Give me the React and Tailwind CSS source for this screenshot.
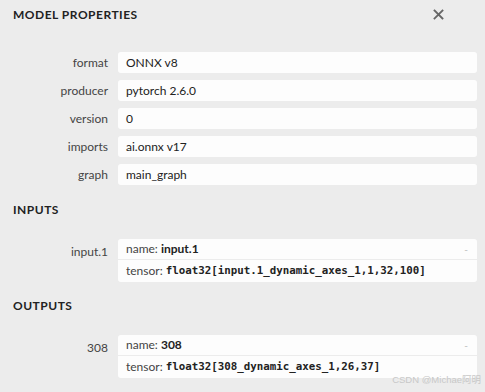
// App.jsx
// Model properties sidebar: attributes, inputs and outputs of a loaded graph.
const sans = { fontFamily: '"Lato", "Noto Sans", sans-serif' };

const attributes = [
  ['format', 'ONNX v8'],
  ['producer', 'pytorch 2.6.0'],
  ['version', '0'],
  ['imports', 'ai.onnx v17'],
  ['graph', 'main_graph'],
];

const SectionTitle = ({ children, className = '' }) => (
  <div className={`flex h-5 items-center pl-[13px] text-[12px] font-bold tracking-[0.5px] text-[#222] ${className}`}>
    {children}
  </div>
);

const ArgumentRow = ({ label, name, tensor }) => (
  <div className="flex">
    <div className="w-[108px] shrink-0 pt-[4px] text-right text-[12px] text-[#444]">{label}</div>
    <div className="ml-[10px] w-[359px] overflow-hidden rounded-[3px] bg-[#fdfdfd]">
      <div className="flex h-[21px] items-center justify-between border-b border-[#ececec] px-2 text-[12px] text-[#444]">
        <span>
          name: <b className="text-[#222]">{name}</b>
        </span>
        <span className="pr-[1px] text-[10px] text-[#bbb]">-</span>
      </div>
      <div className="flex h-[22px] items-center px-2 text-[12px] text-[#444]">
        tensor:&nbsp;
        <span
          className="text-[10.8px] font-bold text-[#222]"
          style={{ fontFamily: '"DejaVu Sans Mono", "Liberation Mono", monospace' }}
        >
          {tensor}
        </span>
      </div>
    </div>
  </div>
);

export default function App() {
  return (
    <div className="relative h-[392px] w-[485px] overflow-hidden bg-[#ececec]" style={sans}>
      <div className="flex items-center justify-between pt-[5px] pr-[41px]">
        <SectionTitle>MODEL PROPERTIES</SectionTitle>
        <svg width="11" height="11" viewBox="0 0 11 11" className="mt-[-2px]">
          <path d="M1.5 1.5 L9.5 9.5 M9.5 1.5 L1.5 9.5" stroke="#666" strokeWidth="1.8" strokeLinecap="square" />
        </svg>
      </div>

      <div className="mt-[27px] flex flex-col gap-[7px]">
        {attributes.map(([label, value]) => (
          <div key={label} className="flex items-center">
            <div className="w-[108px] shrink-0 text-right text-[12px] text-[#444]">{label}</div>
            <div className="ml-[10px] flex h-[21px] w-[359px] items-center rounded-[3px] bg-[#fdfdfd] px-2 text-[12px] text-[#222]">
              {value}
            </div>
          </div>
        ))}
      </div>

      <SectionTitle className="mt-[15px]">INPUTS</SectionTitle>
      <div className="mt-[19px]">
        <ArgumentRow label="input.1" name="input.1" tensor="float32[input.1_dynamic_axes_1,1,32,100]" />
      </div>

      <SectionTitle className="mt-[14px]">OUTPUTS</SectionTitle>
      <div className="mt-[19px]">
        <ArgumentRow label="308" name="308" tensor="float32[308_dynamic_axes_1,26,37]" />
      </div>

      <div
        className="absolute right-[4px] bottom-[5px] text-[9.5px] text-[#c8c8c8]"
        style={{ fontFamily: '"Liberation Sans", "Noto Sans CJK SC", sans-serif' }}
      >
        CSDN @Michae阿明
      </div>
    </div>
  );
}
